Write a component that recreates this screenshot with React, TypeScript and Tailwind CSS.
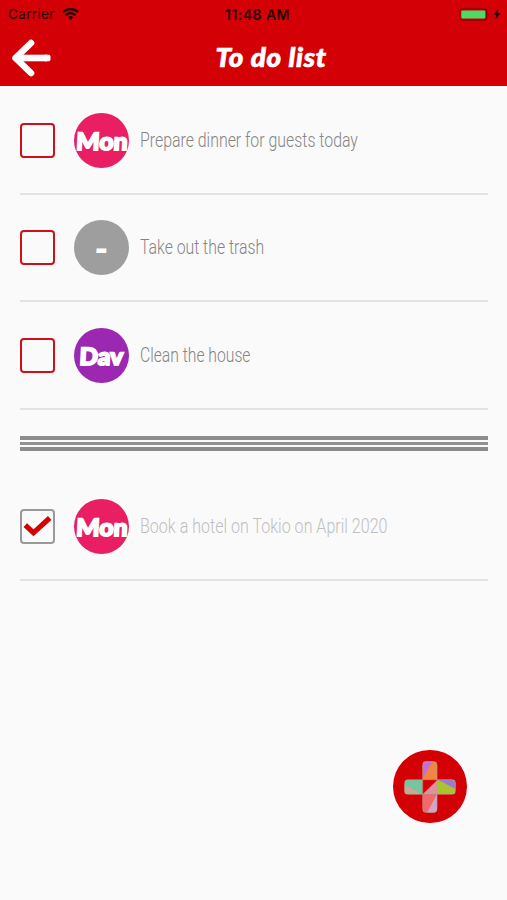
import { clsx } from 'clsx';

type Task = {
  id: number;
  who: string;
  whoClass: string;
  color: string;
  title: string;
  titleClass: string;
  done?: boolean;
};

const pending: Task[] = [
  { id: 1, who: 'Mon', whoClass: 'scale-x-[1.03]', color: 'bg-[#e91e63]', title: 'Prepare dinner for guests today', titleClass: 'scale-x-[0.794]' },
  { id: 2, who: '-', whoClass: 'scale-x-[1.2]', color: 'bg-[#9e9e9e]', title: 'Take out the trash', titleClass: 'scale-x-[0.79]' },
  { id: 3, who: 'Dav', whoClass: 'scale-x-[1.02]', color: 'bg-[#9c27b0]', title: 'Clean the house', titleClass: 'scale-x-[0.785]' },
];

const completed: Task[] = [
  { id: 4, who: 'Mon', whoClass: 'scale-x-[1.03]', color: 'bg-[#e91e63]', title: 'Book a hotel on Tokio on April 2020', titleClass: 'scale-x-[0.803]', done: true },
];

function StatusBar() {
  return (
    <div className="grid h-7 grid-cols-3 items-center pr-1.5 pl-2 font-['Inter',sans-serif] text-[13.5px] text-[#2a0000]">
      <div className="flex items-center gap-[7px]">
        <span className="tracking-[0.35px]">Carrier</span>
        <svg className="h-3 w-[17px]" viewBox="0 0 17 12" fill="none" stroke="#1c0000" strokeWidth="2.1">
          <path d="M0.9 4.3a10.8 10.8 0 0 1 15.2 0" />
          <path d="M3.7 7.1a6.8 6.8 0 0 1 9.6 0" />
          <path d="M8.5 11.9L5.9 9.2a3.7 3.7 0 0 1 5.2 0z" fill="#1c0000" stroke="none" />
        </svg>
      </div>
      <span className="pl-1.5 text-center text-[14px] font-semibold tracking-[0.45px] whitespace-nowrap">11:48 AM</span>
      <div className="flex items-center justify-end gap-[3px]">
        <svg className="h-[13px] w-[31px]" viewBox="0 0 31 13">
          <rect x="0.7" y="1" width="27" height="11" rx="2.5" fill="none" stroke="#760000" strokeWidth="1.2" />
          <rect x="2.3" y="2.5" width="24" height="8" rx="1" fill="#4cd964" />
          <path d="M29 4.6q1.6 1.9 0 3.8z" fill="#760000" />
        </svg>
        <svg className="h-3 w-2" viewBox="0 0 8 12">
          <path d="M5.2 0.5L0.5 6.8h2.8L2.5 11.5 7.5 5H4.6z" fill="#1c0000" />
        </svg>
      </div>
    </div>
  );
}

function Header() {
  return (
    <header className="h-[86px] bg-[#d30006]">
      <StatusBar />
      <div className="grid h-[58px] grid-cols-[54px_1fr_18px] items-center">
        <button aria-label="Back" className="pt-px pl-[11px]">
          <svg className="h-[38px] w-[40px]" viewBox="0 0 40 38" fill="none" stroke="white" strokeWidth="6.6">
            <path d="M20 4L4.5 19 20 34" strokeLinejoin="round" strokeLinecap="round" />
            <path d="M4.5 19H36" />
            <rect x="33" y="16.2" width="6" height="5.6" rx="1" fill="white" strokeWidth="1" />
          </svg>
        </button>
        <h1 className="pb-0.5 text-center font-['Lato',sans-serif] text-[27px] leading-none font-black text-white italic [-webkit-text-stroke:0.7px_white]">
          <span className="inline-block scale-x-[1.03] tracking-[0.7px]">To do list</span>
        </h1>
      </div>
    </header>
  );
}

function Checkbox({ checked }: { checked?: boolean }) {
  return (
    <div
      role="checkbox"
      aria-checked={!!checked}
      className={clsx(
        'flex h-[35px] w-[35px] shrink-0 items-center justify-center rounded-[4px] border-2',
        checked ? 'border-[#999999]' : 'border-[#ce1018]'
      )}
    >
      {checked && (
        <svg className="h-[23px] w-[29px] shrink-0" viewBox="0 0 29 23" fill="none">
          <path d="M2.3 10.2l8.2 7.6L26.7 3" stroke="#d30006" strokeWidth="5.2" />
        </svg>
      )}
    </div>
  );
}

function TaskRow({ task }: { task: Task }) {
  return (
    <li className="flex h-[107.5px] items-center border-b-2 border-[#e2e2e2] pt-px">
      <Checkbox checked={task.done} />
      <div className={clsx('ml-[19px] flex h-[55px] w-[55px] shrink-0 items-center justify-center rounded-full pt-0.5', task.color)}>
        <span
          className={clsx(
            "-skew-x-3 font-['Lato',sans-serif] text-[24px] leading-none font-black text-white [-webkit-text-stroke:1.8px_white]",
            task.whoClass
          )}
        >
          {task.who}
        </span>
      </div>
      <span
        className={clsx(
          "ml-[11px] origin-left pb-px font-['Roboto',sans-serif] text-[20px] leading-none font-light whitespace-nowrap",
          task.titleClass,
          task.done ? 'text-[#bfbfbf]' : 'text-[#858585]'
        )}
      >
        {task.title}
      </span>
    </li>
  );
}

function AddButton() {
  return (
    <button
      aria-label="Add task"
      className="absolute top-[750px] left-[393px] flex h-[73px] w-[74px] items-center justify-center rounded-full bg-[#d30006]"
    >
      <svg className="h-[52px] w-[52px]" viewBox="74 77 156 156">
        <defs>
          <clipPath id="plus">
            <rect x="130" y="78" width="43" height="154" rx="11" />
            <rect x="75" y="133" width="154" height="44" rx="11" />
          </clipPath>
        </defs>
        <g clipPath="url(#plus)">
          <path d="M130 78h43v55h-43z" fill="#f28444" />
          <path d="M130 78h30l-30 52z" fill="#c371d0" />
          <path d="M75 133h55v44H75z" fill="#73c6a0" />
          <path d="M75 146l52 31H75z" fill="#c3ab94" />
          <path d="M173 133h56v44h-56z" fill="#a9c42f" />
          <path d="M175 133h54v28z" fill="#9a7bd0" />
          <path d="M130 133h43v44h-43z" fill="#d30006" />
          <path d="M173 135v42h-43z" fill="#d993a2" />
          <path d="M130 177h43v55h-43z" fill="#f3686c" />
          <path d="M173 177v55h-30z" fill="#d2a4cc" />
        </g>
        <g fill="none" stroke="#b8a08c" strokeOpacity="0.65" strokeWidth="3">
          <path d="M130 133V89q0-10 10-10h23q10 0 10 10v44z" />
          <path d="M130 133H86q-10 0-10 10v24q0 10 10 10h44z" />
          <path d="M173 133h45q10 0 10 10v24q0 10-10 10h-45z" />
          <path d="M130 177v44q0 10 10 10h23q10 0 10-10v-44z" />
        </g>
      </svg>
    </button>
  );
}

export default function App() {
  return (
    <div className="relative h-[900px] w-[507px] overflow-hidden bg-[#fafafa]">
      <Header />
      <main className="pt-px pr-[19px] pl-5">
        <ul>
          {pending.map(task => (
            <TaskRow key={task.id} task={task} />
          ))}
        </ul>

        {/* Separator between pending and completed tasks */}
        <div className="mt-[26px] mb-[22.5px] flex flex-col gap-[2px]">
          <div className="h-[4px] bg-[#8c8c8c]" />
          <div className="h-[3px] bg-[#929292]" />
          <div className="h-[4px] bg-[#8c8c8c]" />
        </div>

        <ul>
          {completed.map(task => (
            <TaskRow key={task.id} task={task} />
          ))}
        </ul>
      </main>
      <AddButton />
    </div>
  );
}
